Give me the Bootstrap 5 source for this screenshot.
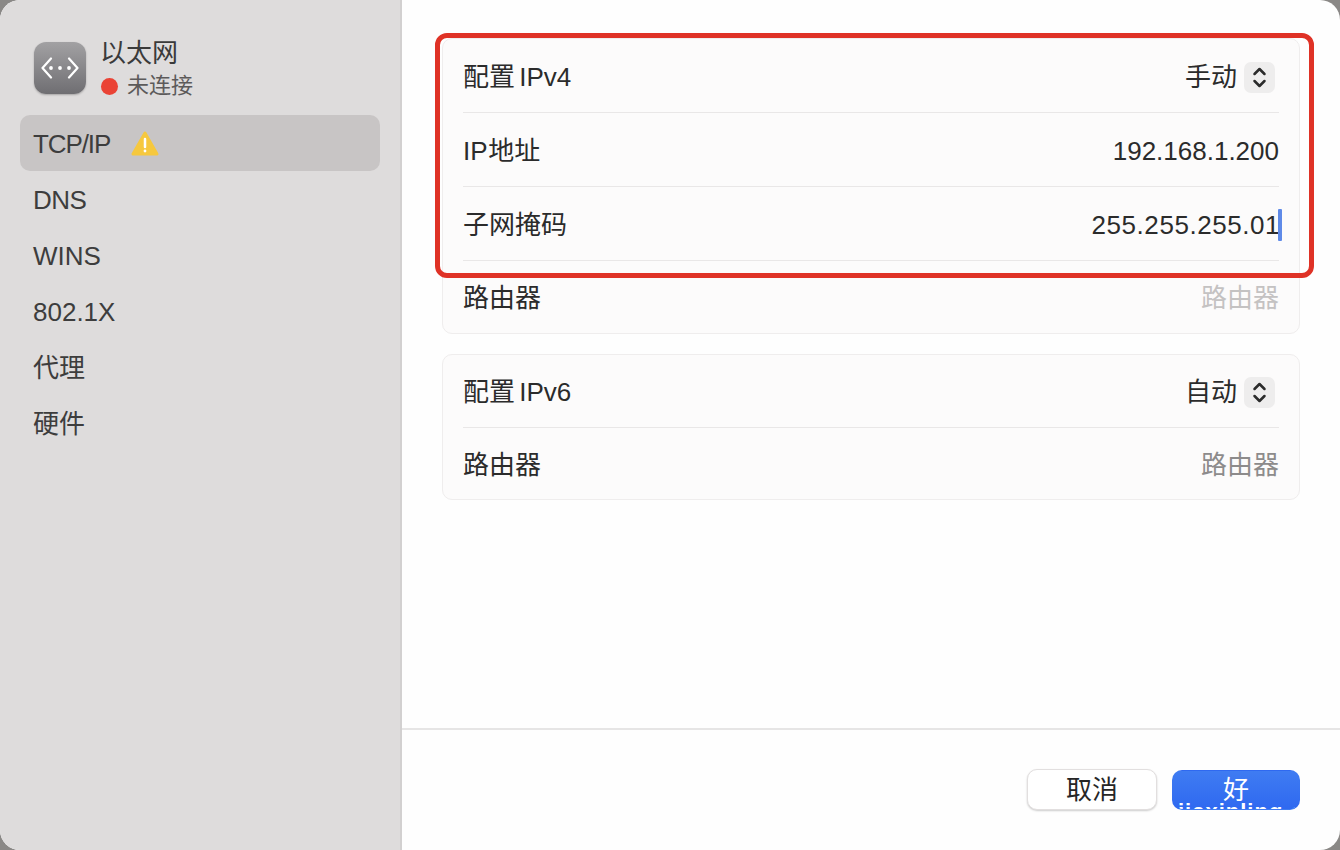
<!DOCTYPE html>
<html lang="zh">
    <head>
        <meta charset="UTF-8">
        <title>以太网</title>
        <link rel="stylesheet" href="https://cdn.jsdelivr.net/npm/bootstrap@5.3.0/dist/css/bootstrap.min.css">
        <style>
            html, body {
                height: 100%;
            }
            body {
                background-color: #8a8886;
                color: #2b2b2b;
                font-family: "Liberation Sans", "Noto Sans CJK SC", sans-serif;
                font-size: 26px;
                overflow: hidden;
            }
            .ventana {
                width: 1340px;
                height: 850px;
                border-radius: 20px;
                overflow: hidden;
                position: relative;
                background-color: #fefefe;
            }
            .lateral {
                width: 402px;
                flex: none;
                background-color: #dedcdc;
                border-right: 2px solid #d2d0d0;
                padding: 38px 20px 0;
            }
            .cabecera {
                padding-left: 14px;
                height: 77px;
                gap: 15px;
            }
            .icono-red {
                width: 52px;
                height: 52px;
                margin-top: 4px;
                border-radius: 12px;
                background: linear-gradient(#a2a1a3, #6f6e72);
                box-shadow: 0 1px 2px rgba(0, 0, 0, .25);
            }
            .titulo-red {
                font-size: 26px;
                line-height: 30px;
                margin-left: -1px;
                color: #3a3a3a;
            }
            .estado-red {
                font-size: 22px;
                line-height: 30px;
                margin-top: 3px;
                gap: 9px;
                color: #5c5a5a;
            }
            .punto-rojo {
                width: 17px;
                height: 17px;
                border-radius: 50%;
                background-color: #ea4335;
            }
            .item-lateral {
                height: 56px;
                padding: 2px 0 0 13px;
                border-radius: 10px;
                color: #3d3d3d;
                line-height: 54px;
            }
            .item-activo {
                background-color: #c8c5c5;
            }
            .apretado {
                letter-spacing: -1.100px;
            }
            .apretado-dns {
                letter-spacing: -.5px;
            }
            .aviso {
                margin-left: 20px;
            }
            .principal {
                min-width: 0;
            }
            .contenido {
                padding: 38px 40px 0;
                height: 728px;
                gap: 20px;
            }
            .tarjeta {
                background-color: #fcfbfb;
                border: 1px solid #efeded;
                border-radius: 10px;
                padding: 0 20px;
            }
            .fila {
                height: 74px;
                padding-top: 3px;
                border-bottom: 1px solid #e9e7e7;
                color: #2b2b2b;
            }
            .fila:last-child {
                border-bottom: 0;
            }
            .tarjeta-a .fila:last-child {
                height: 72px;
            }
            .tarjeta-b .fila {
                height: 73px;
                padding-top: 2px;
            }
            .tarjeta-b .fila:last-child {
                height: 71px;
                padding-top: 3px;
            }
            .espacio-fino {
                word-spacing: -3px;
            }
            .espacio-mini {
                word-spacing: -6px;
            }
            .abierto {
                letter-spacing: .55px;
            }
            .apagado {
                color: #c4c2c2;
            }
            .gris {
                color: #8d8b8b;
            }
            .selector {
                width: 31px;
                height: 31px;
                border-radius: 7px;
                background-color: #eeeded;
                margin-left: 7px;
                margin-right: 4px;
            }
            .cursor-azul {
                width: 4px;
                height: 32px;
                border-radius: 1px;
                background-color: #5f8ae8;
                margin: 0 -3px 0 -2px;
            }
            .marco-rojo {
                position: absolute;
                left: 435px;
                top: 33px;
                width: 879px;
                height: 245px;
                border: 5px solid #df3226;
                border-radius: 12px;
                pointer-events: none;
            }
            .pie {
                height: 122px;
                border-top: 2px solid #e6e5e5;
                padding: 39px 40px 0 0;
                gap: 15px;
            }
            .boton-mac {
                width: 130px;
                height: 41px;
                border-radius: 10px;
                font-size: 26px;
                line-height: 36px;
                padding: 0;
                text-align: center;
                overflow: hidden;
            }
            .boton-cancelar {
                background-color: #fff;
                border: 1px solid #e2dfdf;
                box-shadow: 0 1px 2px rgba(0, 0, 0, .2);
                color: #262626;
            }
            .boton-ok {
                width: 128px;
                height: 40px;
                margin-top: 1px;
                background: linear-gradient(#3f7cf2, #2f69f0);
                color: #fff;
                position: relative;
                line-height: 34px;
            }
            .marca-agua {
                position: absolute;
                left: 5px;
                right: 0;
                top: 30px;
                font-size: 22px;
                font-weight: 700;
                letter-spacing: 1px;
                line-height: 22px;
                white-space: nowrap;
                text-align: left;
            }
        </style>
    </head>
    <body>
        <div class="ventana d-flex">
            <div class="lateral">
                <div class="cabecera d-flex">
                    <div class="icono-red d-flex align-items-center justify-content-center">
                        <svg width="38" height="22" viewBox="0 0 38 22" fill="none" stroke="#fff" stroke-width="2.200" stroke-linecap="round" stroke-linejoin="round">
                            <path d="M10 1.500 1.500 11 10 20.500"/>
                            <path d="M28 1.500 36.500 11 28 20.500"/>
                            <circle cx="10" cy="11" r="1.900" fill="#fff" stroke="none"/>
                            <circle cx="19" cy="11" r="1.900" fill="#fff" stroke="none"/>
                            <circle cx="28" cy="11" r="1.900" fill="#fff" stroke="none"/>
                        </svg>
                    </div>
                    <div>
                        <div class="titulo-red">以太网</div>
                        <div class="estado-red d-flex align-items-center">
                            <span class="punto-rojo"></span>未连接
                        </div>
                    </div>
                </div>
                <div class="item-lateral item-activo d-flex align-items-center">
                    <span class="apretado">TCP/IP</span>
                    <svg class="aviso" width="30" height="28" viewBox="0 0 30 28">
                        <path d="M15 3 27 24H3Z" fill="#f6c83e" stroke="#f6c83e" stroke-width="3" stroke-linejoin="round"/>
                        <path d="M15 9v8" stroke="#fff" stroke-width="2.500" stroke-linecap="round"/>
                        <circle cx="15" cy="21" r="1.400" fill="#fff"/>
                    </svg>
                </div>
                <div class="item-lateral"><span class="apretado-dns">DNS</span></div>
                <div class="item-lateral">WINS</div>
                <div class="item-lateral">802.1X</div>
                <div class="item-lateral">代理</div>
                <div class="item-lateral">硬件</div>
            </div>
            <div class="principal flex-grow-1">
                <div class="contenido d-flex flex-column">
                    <div class="tarjeta tarjeta-a">
                        <div class="fila d-flex justify-content-between align-items-center">
                            <span class="espacio-fino">配置 IPv4</span>
                            <span class="d-flex align-items-center">手动
                                <span class="selector d-flex align-items-center justify-content-center">
                                    <svg width="15" height="23" viewBox="0 0 15 23" fill="none" stroke="#2b2b2b" stroke-width="2.500" stroke-linecap="round" stroke-linejoin="round"><path d="M2.500 8 7.500 3 12.500 8"/><path d="M2.500 15 7.500 20 12.500 15"/></svg>
                                </span>
                            </span>
                        </div>
                        <div class="fila d-flex justify-content-between align-items-center">
                            <span class="espacio-mini">IP 地址</span>
                            <span>192.168.1.200</span>
                        </div>
                        <div class="fila d-flex justify-content-between align-items-center">
                            <span>子网掩码</span>
                            <span class="d-flex align-items-center"><span class="abierto">255.255.255.01</span><span class="cursor-azul"></span></span>
                        </div>
                        <div class="fila d-flex justify-content-between align-items-center">
                            <span>路由器</span>
                            <span class="apagado">路由器</span>
                        </div>
                    </div>
                    <div class="tarjeta tarjeta-b">
                        <div class="fila d-flex justify-content-between align-items-center">
                            <span class="espacio-fino">配置 IPv6</span>
                            <span class="d-flex align-items-center">自动
                                <span class="selector d-flex align-items-center justify-content-center">
                                    <svg width="15" height="23" viewBox="0 0 15 23" fill="none" stroke="#2b2b2b" stroke-width="2.500" stroke-linecap="round" stroke-linejoin="round"><path d="M2.500 8 7.500 3 12.500 8"/><path d="M2.500 15 7.500 20 12.500 15"/></svg>
                                </span>
                            </span>
                        </div>
                        <div class="fila d-flex justify-content-between align-items-center">
                            <span>路由器</span>
                            <span class="gris">路由器</span>
                        </div>
                    </div>
                </div>
                <div class="pie d-flex justify-content-end">
                    <button type="button" class="btn boton-mac boton-cancelar">取消</button>
                    <button type="button" class="btn boton-mac boton-ok">好<span class="marca-agua">jiaxinling.com</span></button>
                </div>
            </div>
            <div class="marco-rojo"></div>
        </div>
        <script src="https://cdn.jsdelivr.net/npm/bootstrap@5.3.0/dist/js/bootstrap.bundle.min.js"></script>
    </body>
</html>
